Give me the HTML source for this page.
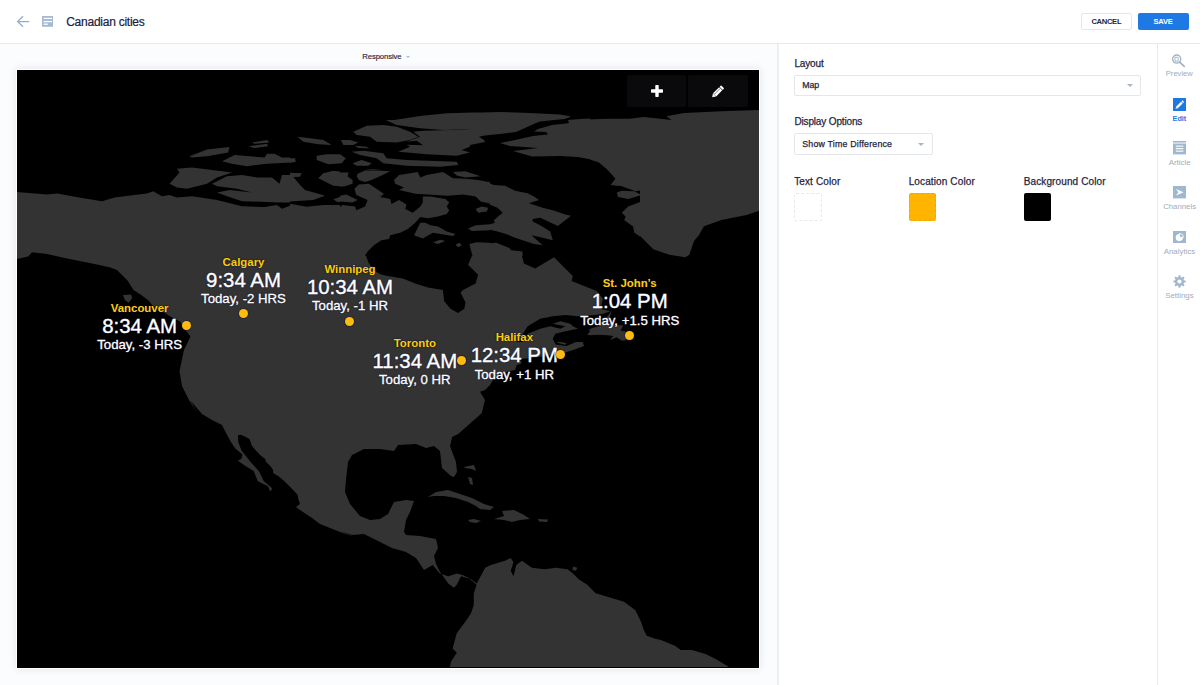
<!DOCTYPE html>
<html><head><meta charset="utf-8"><title>Canadian cities</title>
<style>
*{margin:0;padding:0;box-sizing:border-box}
html,body{width:1200px;height:685px;overflow:hidden;background:#fff;font-family:"Liberation Sans",sans-serif}
</style></head><body>
<div style="position:absolute;left:0;top:0;width:1200px;height:43px;background:#fff"></div>
<div style="position:absolute;left:0;top:43px;width:1200px;height:1px;background:#e7e9ee"></div>
<svg style="position:absolute;left:16px;top:15px" width="14" height="13" viewBox="0 0 14 13"><path d="M13.2 6.5H1.8M7 1.3L1.6 6.5L7 11.7" fill="none" stroke="#95adc6" stroke-width="1.25"/></svg>
<svg style="position:absolute;left:42px;top:16px" width="11.2" height="10.8" viewBox="0 0 11.2 10.8"><rect width="11.2" height="10.8" rx="0.3" fill="#a3bad0"/><rect x="1.6" y="1.75" width="8.4" height="1.3" fill="#fff"/><rect x="1.6" y="4.95" width="8.4" height="1.3" fill="#fff"/><rect x="1.6" y="7.55" width="4.2" height="1.3" fill="#fff"/></svg>
<div style="position:absolute;top:15.64px;font-size:12px;line-height:12px;color:#1c2140;font-weight:normal;white-space:nowrap;letter-spacing:-0.25px;-webkit-text-stroke:0.2px #1c2140;left:66.20px;">Canadian cities</div>
<div style="position:absolute;left:1081px;top:13px;width:51px;height:17px;border:1px solid #e4e7eb;border-radius:2px;background:#fff"></div>
<div style="position:absolute;top:18.17px;font-size:7.6px;line-height:7.6px;color:#1f2440;font-weight:bold;white-space:nowrap;letter-spacing:-0.3px;left:1106.30px;width:0;display:flex;justify-content:center;">CANCEL</div>
<div style="position:absolute;left:1138px;top:13px;width:51px;height:17px;border-radius:2px;background:#1e79e4"></div>
<div style="position:absolute;top:18.27px;font-size:7.6px;line-height:7.6px;color:#fff;font-weight:bold;white-space:nowrap;letter-spacing:-0.25px;left:1163.10px;width:0;display:flex;justify-content:center;">SAVE</div>
<div style="position:absolute;left:0;top:44px;width:778px;height:641px;background:#fbfcfe"></div>
<div style="position:absolute;top:53.08px;font-size:7.7px;line-height:7.7px;color:#1f2440;font-weight:normal;white-space:nowrap;letter-spacing:-0.1px;-webkit-text-stroke:0.15px #1f2440;left:362.30px;">Responsive</div>
<div style="position:absolute;left:406px;top:55.6px;width:0;height:0;border-left:2.2px solid transparent;border-right:2.2px solid transparent;border-top:2.4px solid #9ebddb"></div>
<div style="position:absolute;left:16px;top:69px;width:744px;height:600px;background:#fff;box-shadow:0 0 8px rgba(20,30,70,0.10)"></div>
<div style="position:absolute;left:17px;top:70px;width:742px;height:598px;background:#000;overflow:hidden"><svg width="742" height="597" viewBox="17 70 742 597" style="position:absolute;left:0;top:0"><polygon fill="#333333" points="14.5,270.0 14.5,192.0 17.0,192.0 47.0,194.5 57.0,193.5 82.0,198.0 102.0,201.2 114.5,197.5 134.5,195.0 147.0,193.5 153.2,191.2 162.0,196.2 169.5,195.0 177.0,197.5 192.0,196.2 217.0,200.0 242.0,206.2 264.5,207.0 277.0,205.0 282.0,208.8 292.0,205.0 305.0,203.8 330.0,202.5 350.0,206.2 360.0,202.5 380.0,196.2 360.0,180.0 381.7,180.0 380.0,191.7 385.0,200.0 393.3,203.3 405.0,201.7 410.0,211.7 411.7,205.0 421.7,200.0 423.3,195.8 443.3,198.3 450.0,205.0 446.7,212.5 435.0,215.8 420.0,217.5 418.3,220.8 410.0,228.3 401.7,231.7 390.0,235.0 378.3,241.7 368.3,250.0 365.0,260.0 376.7,270.0 393.3,276.7 410.0,280.0 430.0,286.7 443.3,294.0 443.4,294.0 451.0,304.8 455.3,312.4 461.8,311.3 466.2,302.7 461.8,291.8 472.7,287.5 479.2,278.8 477.0,272.3 468.3,265.8 472.7,257.2 470.5,250.7 468.3,250.0 471.7,243.3 493.3,242.5 510.0,246.7 521.7,253.3 523.3,261.7 535.0,268.3 551.7,258.3 560.0,255.0 553.3,256.7 573.3,278.3 571.7,280.0 596.7,291.7 600.0,300.0 605.3,302.0 613.3,310.0 602.7,313.3 589.3,316.0 573.3,317.3 553.3,318.7 541.3,321.3 530.7,326.0 520.0,330.0 517.3,331.3 517.3,334.0 520.0,334.0 533.3,328.7 546.7,324.7 557.3,322.0 570.7,325.3 560.0,328.0 554.7,331.3 552.0,338.0 556.0,344.7 566.7,346.0 578.7,340.7 582.7,342.0 584.0,346.0 573.3,350.0 560.0,354.0 540.0,356.7 520.0,359.3 521.7,363.3 516.7,365.0 515.0,370.0 506.7,371.7 495.0,376.7 490.0,385.0 485.0,390.0 480.0,391.7 485.0,400.0 481.7,413.3 468.3,425.0 458.3,434.0 452.3,436.7 450.0,446.0 456.0,462.0 457.0,472.0 454.0,477.0 451.0,476.0 442.0,468.0 440.0,451.0 434.0,446.0 426.0,448.0 416.0,444.0 398.0,445.0 394.0,451.0 380.0,449.0 364.0,449.0 352.0,455.0 348.0,462.0 346.0,480.0 345.0,492.0 350.0,504.0 360.0,516.0 370.0,520.0 380.0,519.0 388.0,514.0 392.0,506.0 394.0,502.0 406.0,500.0 414.0,501.0 410.0,512.0 406.0,520.0 404.0,532.0 406.0,535.0 420.0,536.0 436.0,539.0 438.0,548.0 434.0,556.0 436.0,564.0 440.0,572.0 448.3,583.4 454.0,587.7 456.8,584.8 461.1,576.3 471.0,579.2 476.7,583.4 485.2,567.8 490.8,565.0 505.0,560.8 510.7,557.9 513.5,562.2 510.7,570.7 513.5,576.3 516.3,565.0 522.0,560.8 531.9,567.8 544.7,569.3 556.0,567.8 567.4,569.3 573.0,573.5 578.7,579.2 587.2,584.8 595.7,593.3 609.9,597.6 624.0,601.8 635.4,610.3 641.0,621.7 643.9,630.2 646.7,635.8 655.2,638.7 660.9,640.1 675.0,645.8 680.7,650.0 692.0,650.0 706.2,654.3 717.5,659.9 728.9,667.0 731.7,672.7 448.3,672.7 451.2,661.3 456.8,652.8 452.6,648.6 456.8,633.0 465.3,621.7 471.0,613.2 473.8,604.7 473.8,593.3 476.7,584.8 468.2,577.8 462.5,574.9 456.8,573.5 448.3,576.3 439.8,573.5 432.8,565.0 424.0,570.0 420.0,564.0 416.0,558.0 406.0,552.0 392.0,548.0 380.0,542.0 364.0,534.0 352.0,535.0 340.0,531.0 354.0,536.8 340.0,532.0 320.0,524.0 312.0,518.0 300.0,510.0 296.0,507.0 300.0,504.0 298.0,498.0 297.7,495.0 291.5,488.3 283.3,480.2 278.2,476.1 273.1,473.0 273.1,470.0 271.1,466.9 266.0,461.8 265.0,458.7 260.9,455.7 255.8,450.5 251.7,445.4 249.6,439.3 244.5,436.2 240.4,434.7 237.9,435.2 238.4,442.4 241.5,450.5 249.6,460.8 258.8,471.0 263.9,481.2 271.1,487.3 272.1,488.9 270.1,491.4 268.0,486.3 257.8,481.2 253.7,471.0 245.5,465.9 237.9,460.8 241.5,458.7 242.5,454.6 235.3,448.5 231.2,442.4 226.1,433.2 222.0,425.0 212.0,420.0 202.0,414.0 190.0,400.0 197.0,412.0 189.5,401.0 182.0,386.0 179.5,371.0 184.0,350.0 190.5,336.5 186.0,330.8 180.0,321.5 170.8,316.8 161.5,311.0 152.0,305.0 148.5,300.5 140.5,294.5 133.5,290.0 127.5,280.5 117.0,270.0 109.5,267.2 92.0,263.5 67.0,258.5 47.0,254.0 32.0,252.2 28.2,256.5 17.0,259.0 14.5,259.0"/><polygon fill="#333333" points="500.2,143.8 519.0,140.0 541.5,131.2 569.0,120.0 609.0,118.8 629.0,118.8 644.0,117.0 671.5,120.0 666.5,116.2 684.0,113.0 721.5,111.2 761.5,110.0 761.5,210.0 746.5,215.0 721.5,220.0 704.0,226.2 699.0,235.0 694.0,241.0 689.3,254.7 685.3,257.3 669.3,254.7 653.3,249.3 637.3,233.3 621.5,215.0 624.0,210.0 639.0,200.0 629.0,192.5 616.5,187.5 609.0,183.8 616.5,177.5 599.0,162.5 584.0,157.5 559.0,155.0 519.0,153.8 504.0,150.0"/><polygon fill="#333333" points="616.5,192.5 629.0,190.0 639.0,193.8 634.0,198.8 621.5,198.8"/><polygon fill="#333333" points="189.5,156.2 207.0,149.5 229.5,147.0 228.2,152.5 207.0,156.2 192.0,157.5"/><polygon fill="#333333" points="252.0,142.5 267.0,140.0 269.5,142.5 254.5,143.8"/><polygon fill="#333333" points="248.2,146.2 267.0,143.8 268.2,146.2 254.5,148.0"/><polygon fill="#333333" points="297.0,137.5 317.0,138.8 317.0,142.5 302.0,141.2"/><polygon fill="#333333" points="222.0,161.2 234.5,155.0 264.5,157.5 267.0,153.8 274.5,153.8 282.0,157.5 294.5,157.5 292.0,162.5 267.0,163.8 247.0,166.2 232.0,163.8"/><polygon fill="#333333" points="169.5,183.8 179.5,172.5 177.0,168.8 192.0,167.5 232.0,172.5 217.0,177.5 207.0,183.8 187.0,188.8 177.0,187.5"/><polygon fill="#333333" points="212.0,183.8 227.0,176.2 242.0,175.0 257.0,177.5 272.0,177.5 279.5,183.8 282.0,175.0 292.0,175.0 304.5,187.5 317.0,188.8 317.0,202.5 279.5,202.5 242.0,201.2 227.0,196.2 217.0,192.5 229.5,190.0 252.0,192.5 237.0,188.8 217.0,186.2"/><polygon fill="#333333" points="289.5,173.8 299.5,172.5 302.0,175.0 294.5,176.2"/><polygon fill="#333333" points="385.8,121.2 422.0,115.8 447.0,113.2 492.0,112.0 542.0,113.0 570.8,116.2 542.0,121.2 532.0,126.2 507.0,131.2 487.0,135.0 457.0,131.2 442.0,129.5 412.0,128.0 392.0,124.5"/><polygon fill="#333333" points="353.2,130.0 367.0,125.5 384.5,125.5 407.0,131.2 422.0,135.5 412.0,138.8 394.5,142.5 374.5,142.5 367.0,136.2 354.5,133.8"/><polygon fill="#333333" points="404.5,146.2 417.0,142.5 422.0,136.2 452.0,131.2 482.0,137.5 507.0,133.8 537.0,130.0 547.0,133.8 534.5,142.5 507.0,145.0 487.0,148.8 462.0,155.0 442.0,153.8 422.0,152.5 402.0,151.2"/><polygon fill="#333333" points="350.8,151.2 374.5,152.5 392.0,157.5 417.0,159.5 457.0,162.5 457.0,166.2 422.0,167.0 387.0,165.0 377.0,160.0 354.5,155.0"/><polygon fill="#333333" points="317.0,138.8 332.0,142.5 329.5,145.0 317.0,145.0"/><polygon fill="#333333" points="340.8,141.2 354.5,140.0 358.2,143.8 347.0,145.0"/><polygon fill="#333333" points="317.0,156.2 327.0,153.8 344.5,155.0 344.5,162.5 329.5,163.8 317.0,163.0"/><polygon fill="#333333" points="352.0,163.8 362.0,160.0 370.8,162.5 367.0,166.2 354.5,166.2"/><polygon fill="#333333" points="357.0,172.5 369.5,169.5 389.5,171.2 374.5,180.0 362.0,181.2"/><polygon fill="#333333" points="322.0,175.0 337.0,171.2 347.0,172.5 352.0,180.0 342.0,186.2 329.5,183.8 317.0,182.5"/><polygon fill="#333333" points="334.5,200.0 347.0,195.0 357.0,198.8 352.0,202.5 342.0,202.5"/><polygon fill="#333333" points="317.0,210.0 342.0,206.2 357.0,203.8 354.5,190.0 367.0,185.0 379.5,186.2 384.5,197.5 392.0,205.0 402.0,200.0 409.5,195.0 417.0,205.0 422.0,197.5 442.0,197.5 449.5,205.0 444.5,215.0 429.5,220.0 417.0,230.0 412.0,242.5 317.0,242.5"/><polygon fill="#333333" points="394.5,180.0 409.5,172.5 417.0,175.0 424.5,172.5 442.0,172.5 452.0,177.5 492.0,187.5 504.5,186.2 537.0,200.0 532.0,203.8 552.0,210.0 569.5,216.2 557.0,225.0 534.5,220.0 542.0,230.0 537.0,242.5 512.0,242.5 497.0,235.0 492.0,227.5 472.0,230.0 467.0,226.2 482.0,220.0 487.0,215.0 497.0,210.0 477.0,205.0 467.0,197.5 447.0,195.0 417.0,192.5 402.0,192.5"/><polygon fill="#333333" points="454.5,172.5 467.0,171.2 479.5,175.0 472.0,177.5 457.0,176.2"/><polygon fill="#333333" points="466.7,229.2 476.7,225.8 491.7,222.5 493.3,218.3 503.3,212.5 500.0,207.5 488.3,203.3 476.7,205.0 466.7,196.7 453.3,195.8 476.7,190.0 493.3,186.7 510.0,190.0 526.7,191.7 536.7,200.0 530.0,203.3 526.7,209.2 560.0,210.8 560.0,214.2 551.7,218.3 533.3,220.0 533.3,223.3 551.7,228.3 560.0,230.0 560.0,240.0 553.3,245.0 543.3,245.0 526.7,238.3 506.7,233.3 490.0,229.2 476.7,230.8"/><polygon fill="#333333" points="413.3,235.0 420.0,222.5 426.7,225.0 433.3,226.7 443.3,230.0 455.0,233.3 450.0,235.8 433.3,233.3 423.3,238.3"/><polygon fill="#333333" points="433.3,242.5 440.0,239.7 445.0,240.8 438.3,244.2"/><polygon fill="#333333" points="455.8,244.2 460.0,242.5 462.0,245.0 458.3,247.5"/><polygon fill="#333333" points="475.0,209.2 480.0,206.3 488.3,207.5 486.7,212.5 476.7,212.5"/><polygon fill="#333333" points="500.0,230.0 550.0,230.0 553.3,238.3 543.3,243.3 528.3,240.0 516.7,236.7 508.3,233.3 500.0,235.0"/><polygon fill="#333333" points="587.3,334.7 590.0,331.3 588.7,330.0 592.0,328.0 600.0,326.0 606.0,318.0 611.7,310.7 609.7,317.3 607.7,322.7 618.0,325.3 623.3,325.3 620.7,330.7 625.3,331.3 626.7,340.0 622.0,340.7 616.7,337.3 610.0,340.0 613.3,336.0 607.3,335.3 598.0,334.7 590.0,335.3"/><polygon fill="#333333" points="556.0,340.7 566.7,343.3 565.3,344.7 557.3,342.7"/><polygon fill="#333333" points="428.0,497.0 436.0,492.0 448.0,490.0 460.0,494.0 472.0,498.0 484.0,504.0 494.0,507.0 490.0,510.0 480.0,509.0 476.0,506.0 468.0,502.0 456.0,498.0 444.0,496.0 434.0,496.0"/><polygon fill="#333333" points="494.0,519.0 504.0,516.0 502.0,511.0 514.0,510.0 524.0,515.0 530.0,519.0 520.0,520.0 512.0,522.0 504.0,520.0"/><polygon fill="#333333" points="468.0,520.0 474.0,519.0 481.0,521.0 476.0,523.0 470.0,522.0"/><polygon fill="#333333" points="538.0,519.0 548.0,519.6 547.0,522.0 539.0,521.6"/><polygon fill="#333333" points="464.0,467.0 474.0,465.0 476.0,471.0 472.0,469.0 465.0,468.0"/><polygon fill="#333333" points="468.0,477.0 472.0,478.0 473.0,485.0 470.0,484.0"/><polygon fill="#333333" points="573.0,566.4 577.3,567.8 575.9,570.7 572.5,570.1"/><polygon fill="#333333" points="122.9,295.1 131.0,294.5 132.2,298.0 128.7,302.7 125.2,300.4"/><clipPath id="pc0"><rect x="290" y="120" width="200" height="114"/></clipPath><g clip-path="url(#pc0)"><rect x="290" y="120" width="200" height="114" fill="#000"/><polygon fill="#333333" points="385.8,120.0 490.0,120.0 490.0,128.3 443.3,130.0 420.0,128.3 396.7,125.0"/><polygon fill="#333333" points="353.3,131.7 366.7,125.8 383.3,125.0 396.7,126.7 410.0,131.7 418.3,136.7 410.0,140.0 396.7,142.5 376.7,141.7 370.0,136.7 356.7,135.0"/><polygon fill="#333333" points="398.3,151.7 410.0,146.7 406.7,144.7 423.3,145.3 416.7,140.8 406.7,141.7 420.0,136.7 413.3,131.7 423.3,130.8 443.3,130.3 490.0,128.3 490.0,136.7 481.7,138.3 485.0,141.7 470.0,146.7 461.7,150.0 470.0,152.5 456.7,155.8 426.7,154.2"/><polygon fill="#333333" points="351.7,151.7 363.3,150.8 383.3,153.3 386.7,158.3 406.7,160.0 456.7,161.7 458.3,165.0 440.0,166.7 406.7,165.8 383.3,163.3 376.7,158.3 360.0,155.0"/><polygon fill="#333333" points="297.5,136.7 310.0,138.3 323.3,140.0 331.7,145.0 318.3,144.2 303.3,141.7"/><polygon fill="#333333" points="340.8,140.0 350.0,140.0 358.3,142.5 353.3,145.0 343.3,145.0"/><polygon fill="#333333" points="355.0,145.8 366.7,146.7 369.2,148.3 358.3,148.0"/><polygon fill="#333333" points="286.7,158.3 295.0,158.3 295.8,161.7 286.7,163.7"/><polygon fill="#333333" points="316.7,155.8 326.7,154.2 340.0,154.2 345.8,158.3 341.7,163.3 328.3,164.2 316.7,160.0"/><polygon fill="#333333" points="352.5,163.3 361.7,160.0 371.7,163.3 368.3,165.8 356.7,165.8"/><polygon fill="#333333" points="286.7,172.5 301.7,173.3 300.0,176.7 286.7,177.5"/><polygon fill="#333333" points="323.3,173.3 333.3,170.8 348.3,172.5 345.0,175.0 353.3,181.7 346.7,186.7 333.3,185.8 318.3,178.3"/><polygon fill="#333333" points="356.7,173.3 363.3,170.0 373.3,169.2 390.0,170.8 383.3,175.0 373.3,178.3 363.3,181.7 358.3,180.0"/><polygon fill="#333333" points="393.3,181.7 396.7,175.0 420.0,171.7 418.3,177.5 431.7,173.3 443.3,172.5 453.3,179.2 473.3,180.0 493.3,181.7 493.3,201.7 476.7,198.3 456.7,195.0 430.0,193.3 403.3,189.2 400.0,186.7"/><polygon fill="#333333" points="453.3,173.3 465.0,171.7 480.0,175.0 478.3,177.5 466.7,177.5 456.7,176.7"/><polygon fill="#333333" points="286.7,177.5 293.3,176.7 300.0,185.0 305.0,190.0 316.7,193.3 325.0,195.8 313.3,200.0 286.7,201.7"/><polygon fill="#333333" points="333.3,199.2 343.3,195.8 353.3,198.3 358.3,201.7 350.0,203.3 336.7,201.7"/><polygon fill="#333333" points="286.7,203.3 306.7,206.7 323.3,205.0 341.7,205.0 355.8,210.8 358.3,203.3 355.0,191.7 361.7,184.2 371.7,185.0 383.3,193.3 388.3,203.3 403.3,210.0 413.3,215.0 421.7,206.7 425.0,197.5 446.7,201.7 450.0,206.7 445.0,213.3 436.7,218.3 423.3,220.8 416.7,226.7 410.0,240.0 286.7,240.0"/><polygon fill="#333333" points="475.0,207.5 481.7,205.8 488.3,208.3 485.0,212.5 476.7,212.5"/><polygon fill="#333333" points="468.3,226.7 481.7,224.2 493.3,225.0 493.3,230.8 473.3,230.8"/><polygon fill="#333333" points="423.3,223.3 431.7,225.0 433.3,240.0 420.0,240.0"/></g><clipPath id="pc1"><rect x="340" y="170" width="150" height="86"/></clipPath><g clip-path="url(#pc1)"><rect x="340" y="170" width="150" height="86" fill="#000"/><polygon fill="#333333" points="337.5,172.5 348.8,172.5 347.5,176.3 352.6,180.0 352.6,183.8 345.0,186.3 337.5,186.9"/><polygon fill="#333333" points="357.6,173.8 365.1,170.6 377.7,170.6 390.2,171.3 382.7,175.0 371.4,180.0 365.1,181.9 358.8,180.0 356.9,176.3"/><polygon fill="#333333" points="337.5,208.9 342.5,205.1 355.1,206.4 356.3,210.2 365.1,206.4 367.6,200.1 356.3,195.1 354.4,188.8 358.8,184.4 368.9,183.8 376.4,188.8 383.9,193.8 380.2,197.0 390.2,198.9 391.5,203.9 399.0,200.1 406.5,204.5 405.3,208.9 412.8,212.7 420.3,206.4 422.8,202.6 422.8,196.4 430.4,196.4 445.4,198.9 449.2,202.6 446.7,206.4 449.2,210.2 446.7,213.9 437.9,216.4 427.9,218.3 420.3,217.1 415.3,222.7 407.8,229.0 400.2,232.8 390.2,235.3 389.0,239.0 381.4,240.3 373.9,245.3 367.6,251.6 363.8,257.9 337.5,257.9"/><polygon fill="#333333" points="394.0,180.0 399.0,175.0 417.8,171.9 420.3,177.5 426.6,175.0 442.9,171.9 453.0,178.2 465.5,178.8 478.1,180.0 491.9,182.6 491.9,203.9 480.6,201.4 475.6,196.4 463.0,194.5 447.9,195.7 415.3,193.8 399.0,190.1 404.0,187.6 395.2,183.8"/><polygon fill="#333333" points="453.0,171.9 465.5,171.3 480.6,176.3 465.5,177.5 456.7,175.6"/><polygon fill="#333333" points="337.5,196.4 346.3,194.5 357.6,200.1 352.6,202.6 337.5,201.4"/><polygon fill="#333333" points="414.1,235.3 420.3,222.7 425.4,222.7 430.4,225.2 437.9,226.5 446.7,231.5 455.5,234.0 453.0,235.9 440.4,234.0 432.9,232.8 422.8,238.4"/><polygon fill="#333333" points="432.9,242.2 440.4,239.7 445.4,240.9 437.9,244.1"/><polygon fill="#333333" points="455.5,244.7 459.2,242.8 461.8,245.3 458.0,247.2"/><polygon fill="#333333" points="468.0,228.4 475.6,225.2 491.9,224.0 491.9,230.2 471.8,230.9"/><polygon fill="#333333" points="475.6,208.9 481.8,206.4 488.1,207.7 486.9,211.4 478.1,212.7"/><polygon fill="#333333" points="469.3,244.1 476.8,242.2 491.9,242.8 491.9,257.9 473.0,257.9"/></g><clipPath id="pc2"><rect x="490" y="170" width="150" height="86"/></clipPath><g clip-path="url(#pc2)"><rect x="490" y="170" width="150" height="86" fill="#000"/><polygon fill="#333333" points="487.5,182.6 493.8,185.1 505.1,185.7 515.1,190.7 527.7,193.2 533.9,196.4 539.0,200.1 528.9,203.3 542.7,207.7 552.8,210.2 565.3,214.6 571.0,215.8 565.3,220.2 557.8,225.9 540.2,217.7 532.7,219.0 532.7,221.5 540.2,225.2 550.2,231.5 552.8,240.3 542.7,237.8 531.4,235.3 542.7,245.3 533.9,244.1 515.1,237.8 507.6,234.6 497.5,231.5 487.5,229.0 487.5,225.2 495.0,222.7 493.8,220.2 502.6,212.7 497.5,207.7 487.5,203.9"/><polygon fill="#333333" points="487.5,243.4 496.3,242.8 508.8,247.8 511.3,250.3 522.6,251.6 522.6,257.9 487.5,257.9"/><polygon fill="#333333" points="605.5,167.5 641.9,167.5 641.9,190.1 635.6,191.3 621.8,186.3 610.5,185.1 615.5,178.8"/><polygon fill="#333333" points="616.8,192.6 621.8,190.7 634.3,191.3 641.9,195.1 628.1,198.9 618.0,197.0"/><polygon fill="#333333" points="641.9,201.4 628.1,206.4 621.8,212.7 625.6,216.4 624.3,220.2 633.1,226.5 634.3,232.8 641.9,237.8"/></g><clipPath id="pc3"><rect x="340" y="256" width="150" height="86"/></clipPath><g clip-path="url(#pc3)"><rect x="340" y="256" width="150" height="86" fill="#000"/><polygon fill="#333333" points="337.5,253.5 491.9,253.5 491.9,343.9 337.5,343.9"/><polygon fill="#000" points="365.1,253.5 473.0,253.5 468.0,264.8 478.1,274.8 475.6,283.6 463.0,289.9 460.5,292.4 465.5,302.4 464.3,308.7 458.0,313.1 450.5,308.7 444.2,301.2 442.9,289.9 427.9,287.4 415.3,283.6 402.8,278.6 387.7,276.1 380.2,274.2 375.1,271.1 368.9,263.5"/></g><clipPath id="pc4"><rect x="490" y="256" width="150" height="86"/></clipPath><g clip-path="url(#pc4)"><rect x="490" y="256" width="150" height="86" fill="#000"/><polygon fill="#333333" points="487.5,253.5 521.4,253.5 523.9,263.5 535.2,268.6 554.0,257.3 572.8,276.1 571.6,281.1 596.7,291.1 603.0,298.7 600.5,308.7 610.5,311.2 603.0,313.7 595.4,315.0 577.9,316.2 565.3,315.0 552.8,316.2 540.2,318.8 527.7,326.3 521.4,336.3 515.1,343.9 487.5,343.9"/><polygon fill="#333333" points="521.4,343.9 527.7,333.8 540.2,328.8 550.2,326.3 560.3,328.8 565.3,326.3 552.8,323.8 560.3,321.3 570.3,323.8 572.8,326.3 577.9,328.8 565.3,331.3 555.3,333.8 552.8,338.8 555.3,343.9"/><polygon fill="#333333" points="587.3,334.7 590.0,331.3 588.7,330.0 592.0,328.0 600.0,326.0 606.0,318.0 611.7,310.7 609.7,317.3 607.7,322.7 618.0,325.3 623.3,325.3 620.7,330.7 625.3,331.3 626.7,340.0 622.0,340.7 616.7,337.3 610.0,340.0 613.3,336.0 607.3,335.3 598.0,334.7 590.0,335.3"/></g><clipPath id="pc5"><rect x="470" y="105" width="120" height="68"/></clipPath><g clip-path="url(#pc5)"><rect x="470" y="105" width="120" height="68" fill="#000"/><polygon fill="#333333" points="468.0,112.5 482.0,112.5 500.0,112.0 530.0,113.0 560.0,114.5 571.0,116.5 565.0,119.0 554.0,120.0 540.0,121.5 536.0,123.0 526.0,127.5 516.0,132.0 500.0,134.0 485.0,135.5 479.0,136.8 484.0,140.0 485.0,142.0 468.0,145.5"/><polygon fill="#333333" points="568.0,120.0 580.0,119.0 592.0,118.5 592.0,159.5 578.0,157.0 560.0,156.0 532.0,156.5 513.0,151.0 530.0,149.0 538.0,148.0 510.0,146.0 500.0,143.0 515.0,140.0 533.0,136.0 548.0,134.5 546.0,132.0 534.0,131.5 538.0,129.0 552.0,125.0 566.0,123.5 569.0,123.0"/></g></svg></div>
<div style="position:absolute;left:627px;top:75px;width:59px;height:32px;background:#0a0a0c;border-radius:2px"></div>
<div style="position:absolute;left:688px;top:75px;width:60px;height:32px;background:#0a0a0c;border-radius:2px"></div>
<svg style="position:absolute;left:650.8px;top:85.1px" width="12" height="12" viewBox="0 0 12 12"><rect x="4.3" y="0" width="3.4" height="12" rx="0.7" fill="#fff"/><rect x="0" y="4.3" width="12" height="3.4" rx="0.7" fill="#fff"/></svg>
<svg style="position:absolute;left:711px;top:85px" width="14" height="13" viewBox="0 0 14 13"><g transform="rotate(-45 7 6.5)"><rect x="2.2" y="4.3" width="8.6" height="4.4" fill="#fff"/><rect x="11.4" y="4.3" width="2.2" height="4.4" rx="0.6" fill="#fff"/><path d="M2 4.3L-1.2 6.5L2 8.7Z" fill="#fff"/><rect x="2.6" y="5.6" width="7.6" height="0.7" fill="#777"/></g></svg>
<div style="position:absolute;top:256.75px;font-size:11.4px;line-height:11.4px;color:#ffcc00;font-weight:bold;white-space:nowrap;text-shadow:0 0 1px rgba(8,14,60,0.9),0 0 2px rgba(8,14,60,0.6);left:243.50px;width:0;display:flex;justify-content:center;">Calgary</div>
<div style="position:absolute;top:269.63px;font-size:20.4px;line-height:20.4px;color:#fff;font-weight:normal;white-space:nowrap;text-shadow:0 0 1px rgba(8,14,60,0.9),0 0 2px rgba(8,14,60,0.6);-webkit-text-stroke:0.35px #fff;left:243.50px;width:0;display:flex;justify-content:center;">9:34 AM</div>
<div style="position:absolute;top:292.13px;font-size:13.2px;line-height:13.2px;color:#fff;font-weight:normal;white-space:nowrap;text-shadow:0 0 1px rgba(8,14,60,0.9),0 0 2px rgba(8,14,60,0.6);-webkit-text-stroke:0.3px #fff;left:243.50px;width:0;display:flex;justify-content:center;">Today, -2 HRS</div>
<div style="position:absolute;left:238.70px;top:309.40px;width:9px;height:9px;border-radius:50%;background:#ffbb0e;box-shadow:0 0 0 1px rgba(20,25,60,0.45)"></div>
<div style="position:absolute;top:302.95px;font-size:11.4px;line-height:11.4px;color:#ffcc00;font-weight:bold;white-space:nowrap;text-shadow:0 0 1px rgba(8,14,60,0.9),0 0 2px rgba(8,14,60,0.6);left:139.60px;width:0;display:flex;justify-content:center;">Vancouver</div>
<div style="position:absolute;top:315.83px;font-size:20.4px;line-height:20.4px;color:#fff;font-weight:normal;white-space:nowrap;text-shadow:0 0 1px rgba(8,14,60,0.9),0 0 2px rgba(8,14,60,0.6);-webkit-text-stroke:0.35px #fff;left:139.60px;width:0;display:flex;justify-content:center;">8:34 AM</div>
<div style="position:absolute;top:338.33px;font-size:13.2px;line-height:13.2px;color:#fff;font-weight:normal;white-space:nowrap;text-shadow:0 0 1px rgba(8,14,60,0.9),0 0 2px rgba(8,14,60,0.6);-webkit-text-stroke:0.3px #fff;left:139.60px;width:0;display:flex;justify-content:center;">Today, -3 HRS</div>
<div style="position:absolute;left:182.10px;top:320.90px;width:9px;height:9px;border-radius:50%;background:#ffbb0e;box-shadow:0 0 0 1px rgba(20,25,60,0.45)"></div>
<div style="position:absolute;top:263.95px;font-size:11.4px;line-height:11.4px;color:#ffcc00;font-weight:bold;white-space:nowrap;text-shadow:0 0 1px rgba(8,14,60,0.9),0 0 2px rgba(8,14,60,0.6);left:350.00px;width:0;display:flex;justify-content:center;">Winnipeg</div>
<div style="position:absolute;top:276.83px;font-size:20.4px;line-height:20.4px;color:#fff;font-weight:normal;white-space:nowrap;text-shadow:0 0 1px rgba(8,14,60,0.9),0 0 2px rgba(8,14,60,0.6);-webkit-text-stroke:0.35px #fff;left:350.00px;width:0;display:flex;justify-content:center;">10:34 AM</div>
<div style="position:absolute;top:299.33px;font-size:13.2px;line-height:13.2px;color:#fff;font-weight:normal;white-space:nowrap;text-shadow:0 0 1px rgba(8,14,60,0.9),0 0 2px rgba(8,14,60,0.6);-webkit-text-stroke:0.3px #fff;left:350.00px;width:0;display:flex;justify-content:center;">Today, -1 HR</div>
<div style="position:absolute;left:345.20px;top:316.70px;width:9px;height:9px;border-radius:50%;background:#ffbb0e;box-shadow:0 0 0 1px rgba(20,25,60,0.45)"></div>
<div style="position:absolute;top:337.95px;font-size:11.4px;line-height:11.4px;color:#ffcc00;font-weight:bold;white-space:nowrap;text-shadow:0 0 1px rgba(8,14,60,0.9),0 0 2px rgba(8,14,60,0.6);left:414.80px;width:0;display:flex;justify-content:center;">Toronto</div>
<div style="position:absolute;top:350.83px;font-size:20.4px;line-height:20.4px;color:#fff;font-weight:normal;white-space:nowrap;text-shadow:0 0 1px rgba(8,14,60,0.9),0 0 2px rgba(8,14,60,0.6);-webkit-text-stroke:0.35px #fff;left:414.80px;width:0;display:flex;justify-content:center;">11:34 AM</div>
<div style="position:absolute;top:373.33px;font-size:13.2px;line-height:13.2px;color:#fff;font-weight:normal;white-space:nowrap;text-shadow:0 0 1px rgba(8,14,60,0.9),0 0 2px rgba(8,14,60,0.6);-webkit-text-stroke:0.3px #fff;left:414.80px;width:0;display:flex;justify-content:center;">Today, 0 HR</div>
<div style="position:absolute;left:456.80px;top:355.90px;width:9px;height:9px;border-radius:50%;background:#ffbb0e;box-shadow:0 0 0 1px rgba(20,25,60,0.45)"></div>
<div style="position:absolute;top:332.25px;font-size:11.4px;line-height:11.4px;color:#ffcc00;font-weight:bold;white-space:nowrap;text-shadow:0 0 1px rgba(8,14,60,0.9),0 0 2px rgba(8,14,60,0.6);left:514.30px;width:0;display:flex;justify-content:center;">Halifax</div>
<div style="position:absolute;top:345.13px;font-size:20.4px;line-height:20.4px;color:#fff;font-weight:normal;white-space:nowrap;text-shadow:0 0 1px rgba(8,14,60,0.9),0 0 2px rgba(8,14,60,0.6);-webkit-text-stroke:0.35px #fff;left:514.30px;width:0;display:flex;justify-content:center;">12:34 PM</div>
<div style="position:absolute;top:367.63px;font-size:13.2px;line-height:13.2px;color:#fff;font-weight:normal;white-space:nowrap;text-shadow:0 0 1px rgba(8,14,60,0.9),0 0 2px rgba(8,14,60,0.6);-webkit-text-stroke:0.3px #fff;left:514.30px;width:0;display:flex;justify-content:center;">Today, +1 HR</div>
<div style="position:absolute;left:555.90px;top:349.90px;width:9px;height:9px;border-radius:50%;background:#ffbb0e;box-shadow:0 0 0 1px rgba(20,25,60,0.45)"></div>
<div style="position:absolute;top:278.45px;font-size:11.4px;line-height:11.4px;color:#ffcc00;font-weight:bold;white-space:nowrap;text-shadow:0 0 1px rgba(8,14,60,0.9),0 0 2px rgba(8,14,60,0.6);left:629.70px;width:0;display:flex;justify-content:center;">St. John&rsquo;s</div>
<div style="position:absolute;top:291.33px;font-size:20.4px;line-height:20.4px;color:#fff;font-weight:normal;white-space:nowrap;text-shadow:0 0 1px rgba(8,14,60,0.9),0 0 2px rgba(8,14,60,0.6);-webkit-text-stroke:0.35px #fff;left:629.70px;width:0;display:flex;justify-content:center;">1:04 PM</div>
<div style="position:absolute;top:313.83px;font-size:13.2px;line-height:13.2px;color:#fff;font-weight:normal;white-space:nowrap;text-shadow:0 0 1px rgba(8,14,60,0.9),0 0 2px rgba(8,14,60,0.6);-webkit-text-stroke:0.3px #fff;left:629.70px;width:0;display:flex;justify-content:center;">Today, +1.5 HRS</div>
<div style="position:absolute;left:624.60px;top:331.20px;width:9px;height:9px;border-radius:50%;background:#ffbb0e;box-shadow:0 0 0 1px rgba(20,25,60,0.45)"></div>
<div style="position:absolute;left:777px;top:44px;width:2px;height:641px;background:#eceef2"></div>
<div style="position:absolute;left:779px;top:44px;width:378px;height:641px;background:#fff"></div>
<div style="position:absolute;top:59.03px;font-size:10px;line-height:10px;color:#1f2440;font-weight:normal;white-space:nowrap;-webkit-text-stroke:0.25px #1f2440;letter-spacing:-0.15px;left:794.40px;">Layout</div>
<div style="position:absolute;left:794px;top:75px;width:347px;height:21px;border:1px solid #e3e6eb;border-radius:2px;background:#fff"></div>
<div style="position:absolute;top:81.35px;font-size:8.8px;line-height:8.8px;color:#1f2440;font-weight:normal;white-space:nowrap;-webkit-text-stroke:0.25px #1f2440;letter-spacing:-0.15px;left:802.30px;">Map</div>
<div style="position:absolute;left:1127px;top:84px;width:0;height:0;border-left:3.5px solid transparent;border-right:3.5px solid transparent;border-top:3.5px solid #a4b6c8"></div>
<div style="position:absolute;top:116.73px;font-size:10px;line-height:10px;color:#1f2440;font-weight:normal;white-space:nowrap;-webkit-text-stroke:0.25px #1f2440;letter-spacing:-0.15px;left:794.40px;">Display Options</div>
<div style="position:absolute;left:794px;top:133px;width:139px;height:22px;border:1px solid #e3e6eb;border-radius:2px;background:#fff"></div>
<div style="position:absolute;top:140.25px;font-size:8.8px;line-height:8.8px;color:#1f2440;font-weight:normal;white-space:nowrap;-webkit-text-stroke:0.25px #1f2440;letter-spacing:-0.15px;letter-spacing:0.2px;left:802.30px;">Show Time Difference</div>
<div style="position:absolute;left:918px;top:143px;width:0;height:0;border-left:3.5px solid transparent;border-right:3.5px solid transparent;border-top:3.5px solid #a4b6c8"></div>
<div style="position:absolute;top:177.13px;font-size:10px;line-height:10px;color:#1f2440;font-weight:normal;white-space:nowrap;-webkit-text-stroke:0.25px #1f2440;letter-spacing:-0.15px;letter-spacing:0.12px;left:794.20px;">Text Color</div>
<div style="position:absolute;top:177.13px;font-size:10px;line-height:10px;color:#1f2440;font-weight:normal;white-space:nowrap;-webkit-text-stroke:0.25px #1f2440;letter-spacing:-0.15px;letter-spacing:0.12px;left:908.70px;">Location Color</div>
<div style="position:absolute;top:177.13px;font-size:10px;line-height:10px;color:#1f2440;font-weight:normal;white-space:nowrap;-webkit-text-stroke:0.25px #1f2440;letter-spacing:-0.15px;letter-spacing:0.12px;left:1023.70px;">Background Color</div>
<div style="position:absolute;left:794px;top:193px;width:28px;height:28px;border:1px dashed #e6e8eb;border-radius:2px;background:#fff"></div>
<div style="position:absolute;left:909px;top:193px;width:27px;height:28px;border-radius:2px;background:#ffb400;border:1px dashed #f0a800"></div>
<div style="position:absolute;left:1024px;top:193px;width:27px;height:28px;border-radius:2px;background:#000"></div>
<div style="position:absolute;left:1157px;top:44px;width:1px;height:641px;background:#e8eaef"></div>
<div style="position:absolute;left:1158px;top:44px;width:42px;height:641px;background:#fff"></div>
<svg style="position:absolute;left:1170px;top:52px" width="18" height="16" viewBox="0 0 18 16"><circle cx="6.7" cy="7.1" r="4.1" fill="none" stroke="#a3b2c2" stroke-width="1.3"/><path d="M9.7 10.1L14.2 14.3" stroke="#a3b2c2" stroke-width="1.8" stroke-linecap="round"/><path d="M5 5.3H8.2V9.2H5Z" fill="none" stroke="#a3b2c2" stroke-width="0.9"/></svg>
<div style="position:absolute;top:70.17px;font-size:7.6px;line-height:7.6px;color:#a0acbb;font-weight:normal;white-space:nowrap;left:1179.30px;width:0;display:flex;justify-content:center;">Preview</div>
<svg style="position:absolute;left:1172.5px;top:97.5px" width="13.5" height="13" viewBox="0 0 13.5 13"><rect x="0" y="0" width="13.5" height="13" fill="#1f78e2"/><g transform="rotate(-45 6.75 6.5)"><rect x="2.6" y="5.4" width="7" height="2.4" fill="#fff"/><rect x="10.2" y="5.4" width="1.4" height="2.4" fill="#fff"/><path d="M2.6 5.4L0.9 6.6L2.6 7.8Z" fill="#fff"/></g></svg>
<div style="position:absolute;top:114.81px;font-size:7.2px;line-height:7.2px;color:#1f78e2;font-weight:bold;white-space:nowrap;left:1179.40px;width:0;display:flex;justify-content:center;">Edit</div>
<svg style="position:absolute;left:1172.9px;top:141.4px" width="13.2" height="13.4" viewBox="0 0 13.2 13.4"><rect width="13.2" height="13.4" fill="#a0b8cf"/><rect x="0" y="1.6" width="13.2" height="0.9" fill="#fff"/><rect x="2.8" y="4.6" width="7.6" height="1.1" fill="#fff"/><rect x="2.8" y="7.1" width="7.6" height="1.1" fill="#fff"/><rect x="2.8" y="9.6" width="7.6" height="1.1" fill="#fff"/></svg>
<div style="position:absolute;top:158.91px;font-size:7.9px;line-height:7.9px;color:#a0acbb;font-weight:normal;white-space:nowrap;left:1179.60px;width:0;display:flex;justify-content:center;">Article</div>
<svg style="position:absolute;left:1172.9px;top:186.3px" width="13.2" height="12.4" viewBox="0 0 13.2 12.4"><rect width="13.2" height="12.4" fill="#a0b8cf"/><path d="M3 3L10.5 6.2L3 9.4L5.4 6.2Z" fill="#fff"/></svg>
<div style="position:absolute;top:203.10px;font-size:7.8px;line-height:7.8px;color:#a0acbb;font-weight:normal;white-space:nowrap;left:1179.60px;width:0;display:flex;justify-content:center;">Channels</div>
<svg style="position:absolute;left:1172.9px;top:230.6px" width="13.2" height="12.4" viewBox="0 0 13.2 12.4"><rect width="13.2" height="12.4" fill="#a0b8cf"/><circle cx="6.3" cy="6.6" r="3.6" fill="#fff"/><path d="M6.6 6.3V2.4A3.9 3.9 0 0 1 10.5 6.3Z" fill="#a0b8cf" stroke="#fff" stroke-width="0.8"/></svg>
<div style="position:absolute;top:247.51px;font-size:7.9px;line-height:7.9px;color:#a0acbb;font-weight:normal;white-space:nowrap;left:1179.50px;width:0;display:flex;justify-content:center;">Analytics</div>
<svg style="position:absolute;left:1173px;top:274.5px" width="13" height="13" viewBox="-6.5 -6.5 13 13"><g fill="#a0b8cf"><circle r="4.6"/><rect x="-1.05" y="-6.2" width="2.1" height="12.4" rx="0.4"/><rect x="-1.05" y="-6.2" width="2.1" height="12.4" rx="0.4" transform="rotate(45)"/><rect x="-1.05" y="-6.2" width="2.1" height="12.4" rx="0.4" transform="rotate(90)"/><rect x="-1.05" y="-6.2" width="2.1" height="12.4" rx="0.4" transform="rotate(135)"/></g><circle r="2.1" fill="#fff"/></svg>
<div style="position:absolute;top:292.21px;font-size:7.9px;line-height:7.9px;color:#a0acbb;font-weight:normal;white-space:nowrap;left:1179.40px;width:0;display:flex;justify-content:center;">Settings</div>
</body></html>
